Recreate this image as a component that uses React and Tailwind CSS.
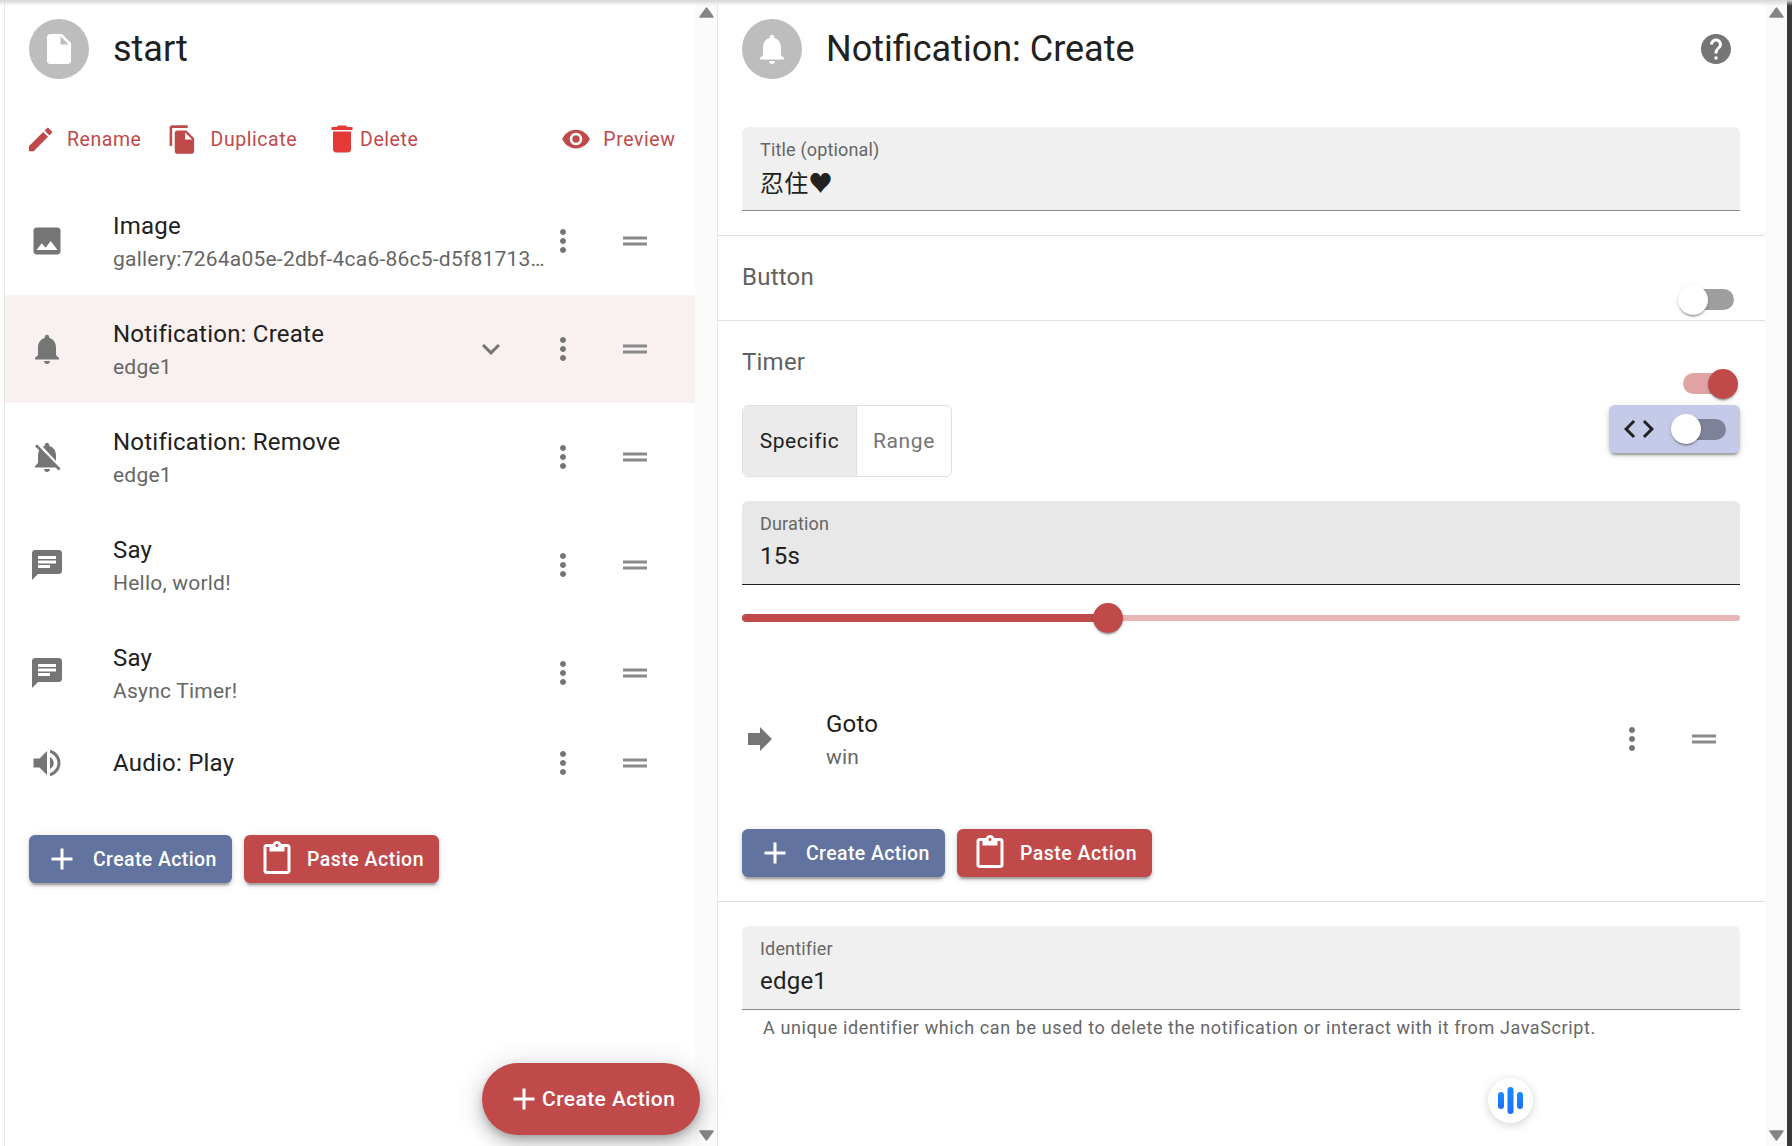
import React from "react";

const P = {
  file: "M6 2c-1.1 0-1.99.9-1.99 2L4 20c0 1.1.89 2 1.99 2H18c1.1 0 2-.9 2-2V8l-6-6H6zm7 7V3.5L18.5 9H13z",
  edit: "M3 17.25V21h3.75L17.81 9.94l-3.75-3.75L3 17.25zM20.71 7.04c.39-.39.39-1.02 0-1.41l-2.34-2.34c-.39-.39-1.02-.39-1.41 0l-1.83 1.83 3.75 3.75 1.83-1.83z",
  copy: "M16 1H4c-1.1 0-2 .9-2 2v14h2V3h12V1zm-1 4l6 6v10c0 1.1-.9 2-2 2H7.99C6.89 23 6 22.1 6 21l.01-14c0-1.1.89-2 1.99-2h7zm-1 7h5.5L14 6.5V12z",
  del: "M6 19c0 1.1.9 2 2 2h8c1.1 0 2-.9 2-2V7H6v12zM19 4h-3.5l-1-1h-5l-1 1H5v2h14V4z",
  eye: "M12 4.5C7 4.5 2.73 7.61 1 12c1.73 4.39 6 7.5 11 7.5s9.27-3.11 11-7.5c-1.73-4.39-6-7.5-11-7.5zM12 17c-2.76 0-5-2.24-5-5s2.24-5 5-5 5 2.24 5 5-2.24 5-5 5zm0-8c-1.66 0-3 1.34-3 3s1.34 3 3 3 3-1.34 3-3-1.34-3-3-3z",
  image: "M21 19V5c0-1.1-.9-2-2-2H5c-1.1 0-2 .9-2 2v14c0 1.1.9 2 2 2h14c1.1 0 2-.9 2-2zM8.5 13.5l2.5 3.01L14.5 12l4.5 6H5l3.5-4.5z",
  bell: "M12 22c1.1 0 2-.9 2-2h-4c0 1.1.89 2 2 2zm6-6v-5c0-3.07-1.64-5.64-4.5-6.32V4c0-.83-.67-1.5-1.5-1.5s-1.5.67-1.5 1.5v.68C7.63 5.36 6 7.92 6 11v5l-2 2v1h16v-1l-2-2z",
  bellOff: "M20 18.69L7.84 6.14 5.27 3.49 4 4.76l2.8 2.8v.01c-.52.99-.8 2.16-.8 3.42v5l-2 2v1h13.73l2 2L21 19.72l-1-1.03zM12 22c1.11 0 2-.89 2-2h-4c0 1.11.89 2 2 2zm6-7.32V11c0-3.08-1.64-5.64-4.5-6.32V4c0-.83-.67-1.5-1.5-1.5s-1.5.67-1.5 1.5v.68c-.15.03-.29.08-.42.12-.1.03-.2.07-.3.11h-.01c-.2.08-.4.17-.59.27-.01 0-.01 0-.02.01L18 14.68z",
  chat: "M20 2H4c-1.1 0-1.99.9-1.99 2L2 22l4-4h14c1.1 0 2-.9 2-2V4c0-1.1-.9-2-2-2zM6 9h12v2H6V9zm8 5H6v-2h8v2zm4-6H6V6h12v2z",
  volume: "M3 9v6h4l5 5V4L7 9H3zm13.5 3c0-1.77-1.02-3.29-2.5-4.03v8.05c1.48-.73 2.5-2.25 2.5-4.02zM14 3.23v2.06c2.89.86 5 3.54 5 6.71s-2.11 5.85-5 6.71v2.06c4.01-.91 7-4.49 7-8.77s-2.99-7.86-7-8.77z",
  expand: "M16.59 8.59L12 13.17 7.41 8.59 6 10l6 6 6-6z",
  more: "M12 8c1.1 0 2-.9 2-2s-.9-2-2-2-2 .9-2 2 .9 2 2 2zm0 2c-1.1 0-2 .9-2 2s.9 2 2 2 2-.9 2-2-.9-2-2-2zm0 6c-1.1 0-2 .9-2 2s.9 2 2 2 2-.9 2-2-.9-2-2-2z",
  drag: "M20 9H4v2h16V9zM4 15h16v-2H4v2z",
  add: "M19 13h-6v6h-2v-6H5v-2h6V5h2v6h6v2z",
  paste: "M19 2h-4.18C14.4.84 13.3 0 12 0c-1.3 0-2.4.84-2.82 2H5c-1.1 0-2 .9-2 2v16c0 1.1.9 2 2 2h14c1.1 0 2-.9 2-2V4c0-1.1-.9-2-2-2zm-7 0c.55 0 1 .45 1 1s-.45 1-1 1-1-.45-1-1 .45-1 1-1zm7 18H5V4h2v3h10V4h2v16z",
  forward: "M12 8V4l8 8-8 8v-4H4V8z",
  help: "M12 2C6.48 2 2 6.48 2 12s4.48 10 10 10 10-4.48 10-10S17.52 2 12 2zm1 17h-2v-2h2v2zm2.07-7.75l-.9.92C13.45 12.9 13 13.5 13 15h-2v-.5c0-1.1.45-2.1 1.17-2.83l1.24-1.26c.37-.36.59-.86.59-1.41 0-1.1-.9-2-2-2s-2 .9-2 2H8c0-2.21 1.79-4 4-4s4 1.79 4 4c0 .88-.36 1.68-.93 2.25z",
  code: "M9.4 16.6L4.8 12l4.6-4.6L8 6l-6 6 6 6 1.4-1.4zm5.2 0l4.6-4.6-4.6-4.6L16 6l6 6-6 6-1.4-1.4z",
};

function Icon({ d, className }) {
  return (
    <svg viewBox="0 0 24 24" fill="currentColor" className={className}>
      <path d={d} />
    </svg>
  );
}

function Arrow({ down }) {
  return (
    <svg viewBox="0 0 15 11" className={down ? "w-[15px] h-[11px] rotate-180" : "w-[15px] h-[11px]"}>
      <path d="M7.5 1 L14 10 L1 10 Z" fill="#858585" stroke="#858585" strokeWidth="1.5" strokeLinejoin="round" />
    </svg>
  );
}

function ScrollCol() {
  return (
    <div className="flex flex-col justify-between w-[22px] shrink-0 bg-[#fbfbfb] pl-[4px] pt-[7px] pb-[5px]">
      <Arrow />
      <Arrow down />
    </div>
  );
}

function Avatar({ d }) {
  return (
    <div className="w-[60px] h-[60px] rounded-full bg-[#bdbdbd] flex items-center justify-center shrink-0">
      <Icon d={d} className="w-[36px] h-[36px] text-white" />
    </div>
  );
}

function Row({ icon, title, sub, chevron, selected, short, right }) {
  return (
    <div
      className={
        "flex items-center pl-[24px] " +
        (short ? "h-[72px] " : "h-[108px] ") +
        (selected ? "bg-[#f9f1f0]" : "")
      }
    >
      <div className="w-[84px] shrink-0">
        <Icon d={icon} className="w-[36px] h-[36px] text-[#757575]" />
      </div>
      <div className="flex-1 min-w-0">
        <div className="text-[24px] leading-[36px] tracking-[0.00938em] text-[#212121] truncate">{title}</div>
        {sub && <div className="text-[21px] leading-[30px] tracking-[0.01071em] text-[#666666] truncate">{sub}</div>}
      </div>
      {chevron && (
        <div className="w-[72px] mr-[19px] flex justify-center shrink-0">
          <Icon d={P.expand} className="w-[36px] h-[36px] text-[#757575]" />
        </div>
      )}
      <div className="w-[34px] flex justify-center shrink-0">
        <Icon d={P.more} className="w-[36px] h-[36px] max-w-none shrink-0 text-[#757575]" />
      </div>
      <div className={(right ? "mr-[6px]" : "mr-[5px]") + " w-[110px] flex justify-center shrink-0"}>
        <Icon d={P.drag} className="w-[36px] h-[36px] text-[#8a8a8a]" />
      </div>
    </div>
  );
}

function ActionButtons({ className }) {
  return (
    <div className={"flex gap-[12px] " + className}>
      <button className="h-[48px] w-[203px] flex items-center pl-[15px] rounded-[6px] bg-[#62739f] text-white shadow-[0_4.5px_1.5px_-3px_rgba(0,0,0,0.2),0_3px_3px_0_rgba(0,0,0,0.14),0_1.5px_7.5px_0_rgba(0,0,0,0.12)]">
        <Icon d={P.add} className="w-[36px] h-[36px]" />
        <span className="ml-[13px] pt-[2px] text-[19.5px] font-medium leading-[36px] tracking-[0.02em]">Create Action</span>
      </button>
      <button className="h-[48px] w-[195px] flex items-center pl-[15px] rounded-[6px] bg-[#c04a4a] text-white shadow-[0_4.5px_1.5px_-3px_rgba(0,0,0,0.2),0_3px_3px_0_rgba(0,0,0,0.14),0_1.5px_7.5px_0_rgba(0,0,0,0.12)]">
        <Icon d={P.paste} className="w-[36px] h-[36px]" />
        <span className="ml-[12px] pt-[2px] text-[19.5px] font-medium leading-[36px] tracking-[0.025em]">Paste Action</span>
      </button>
    </div>
  );
}

function Field({ label, value, active, valueClass }) {
  return (
    <div
      className={
        "h-[84px] rounded-t-[6px] pl-[18px] pt-[12px] border-b-[1.5px] " +
        (active ? "bg-[#e8e8e8] border-[#212121]" : "bg-[#f0f0f0] border-[#8c8c8c]")
      }
    >
      <div className="text-[18px] leading-[21px] tracking-[0.00938em] text-[#666666] mb-[4px]">{label}</div>
      <div className={"text-[24px] leading-[36px] tracking-[0.00938em] text-[#212121] " + (valueClass || "")}>{value}</div>
    </div>
  );
}

function Switch({ on, track }) {
  return (
    <div className={"relative w-[51px] h-[21px] rounded-full " + track}>
      <div
        className={
          "absolute top-[-4.5px] w-[30px] h-[30px] rounded-full shadow-[0_3px_1.5px_-1.5px_rgba(0,0,0,0.2),0_1.5px_1.5px_0_rgba(0,0,0,0.14),0_1.5px_4.5px_0_rgba(0,0,0,0.12)] " +
          (on ? "right-[-4px] bg-[#c04a4a]" : "left-[-5px] bg-white")
        }
      />
    </div>
  );
}

export default function App() {
  return (
    <div className="relative w-[1792px] h-[1146px] overflow-hidden flex bg-white font-[Roboto,'Noto_Sans_CJK_SC',sans-serif]">
      <div className="absolute inset-x-0 top-0 h-[6px] bg-gradient-to-b from-[#d6d6d6] to-transparent z-10" />

      {/* left pane */}
      <div className="relative ml-[4px] w-[714px] shrink-0 flex border-l border-r border-[#e6e6e6]">
        <div className="w-[690px] shrink-0 pt-[19px]">
          <div className="flex items-center pl-[24px]">
            <Avatar d={P.file} />
            <div className="ml-[24px] text-[36px] leading-[60px] text-[#212121]">start</div>
          </div>

          <div className="flex items-center h-[36px] mt-[42px] text-[19.5px] tracking-[0.02857em] font-normal text-[#c04a4a]">
            <Icon d={P.edit} className="ml-[20px] w-[31px] h-[31px]" />
            <span className="ml-[11px] pt-[2px]">Rename</span>
            <Icon d={P.copy} className="ml-[25px] w-[31px] h-[31px]" />
            <span className="ml-[13px] pt-[2px]">Duplicate</span>
            <Icon d={P.del} className="ml-[27px] w-[36px] h-[36px] text-[#e53935]" />
            <span className="pt-[2px]">Delete</span>
            <Icon d={P.eye} className="ml-[143px] w-[30px] h-[30px]" />
            <span className="ml-[12px] pt-[2px]">Preview</span>
          </div>

          <div className="mt-[30px]">
            <Row icon={P.image} title="Image" sub="gallery:7264a05e-2dbf-4ca6-86c5-d5f81713c0a1" />
            <Row icon={P.bell} title="Notification: Create" sub="edge1" chevron selected />
            <Row icon={P.bellOff} title="Notification: Remove" sub="edge1" />
            <Row icon={P.chat} title="Say" sub="Hello, world!" />
            <Row icon={P.chat} title="Say" sub="Async Timer!" />
            <Row icon={P.volume} title="Audio: Play" short />
          </div>

          <ActionButtons className="mt-[36px] ml-[24px]" />
        </div>
        <ScrollCol />

        <button className="absolute right-[17px] bottom-[11px] h-[72px] w-[218px] rounded-[36px] bg-[#c04a4a] text-white flex items-center pl-[24px] shadow-[0_4.5px_7.5px_-1.5px_rgba(0,0,0,0.2),0_9px_15px_1.5px_rgba(0,0,0,0.14),0_3px_27px_3px_rgba(0,0,0,0.12)]">
          <Icon d={P.add} className="w-[36px] h-[36px]" />
          <span className="text-[21px] font-medium tracking-[0.02em] pt-[2px]">Create Action</span>
        </button>
      </div>

      {/* right pane */}
      <div className="relative w-[1047px] shrink-0 pt-[19px]">
        <div className="flex items-center pl-[24px] pr-[31px]">
          <Avatar d={P.bell} />
          <div className="ml-[24px] flex-1 text-[36px] leading-[60px] text-[#212121]">Notification: Create</div>
          <Icon d={P.help} className="w-[36px] h-[36px] text-[#757575]" />
        </div>

        <div className="mt-[48px] pl-[24px] pr-[25px]">
          <Field label="Title (optional)" value="忍住♥" valueClass="pt-[2px]" />
        </div>

        <div className="mt-[24px] h-[86px] border-t border-b border-[#e0e0e0] pl-[24px] pr-[31px] flex justify-between">
          <div className="pt-[23px] text-[24px] leading-[36px] tracking-[0.00938em] text-[#616161]">Button</div>
          <div className="pt-[53px]">
            <Switch track="bg-[#9e9e9e]" />
          </div>
        </div>

        <div className="h-[84px] pl-[24px] pr-[31px] flex justify-between">
          <div className="pt-[23px] text-[24px] leading-[36px] tracking-[0.00938em] text-[#616161]">Timer</div>
          <div className="pt-[52px]">
            <Switch on track="bg-[#e0a4a4]" />
          </div>
        </div>

        <div className="pl-[24px] pr-[25px] flex justify-between items-start">
          <div className="flex h-[72px] rounded-[6px] border border-[#e0e0e0] text-[21px] tracking-[0.02857em]">
            <div className="w-[114px] flex items-center justify-center bg-[#ebebeb] rounded-l-[6px] border-r border-[#e0e0e0] text-[#212121] pt-[1px]">Specific</div>
            <div className="w-[94px] flex items-center justify-center text-[#757575] pt-[1px]">Range</div>
          </div>
          <div className="flex items-center w-[131px] h-[48px] rounded-[6px] bg-[#c5cae9] pl-[12px] shadow-[0_4.5px_1.5px_-3px_rgba(0,0,0,0.2),0_3px_3px_0_rgba(0,0,0,0.14),0_1.5px_7.5px_0_rgba(0,0,0,0.12)]">
            <Icon d={P.code} className="w-[36px] h-[36px] text-[#212121]" />
            <div className="ml-[19px]">
              <Switch track="bg-[#7e8299] !w-[50px]" />
            </div>
          </div>
        </div>

        <div className="mt-[24px] pl-[24px] pr-[25px]">
          <Field label="Duration" value="15s" active />
          <div className="mt-[18px] h-[30px] flex items-center">
            <div className="w-[366px] h-[8px] rounded-l-full bg-[#c04a4a]" />
            <div className="relative flex-1 h-[6px] rounded-r-full bg-[#e8b6b6]">
              <div className="absolute left-[-15px] top-[-12px] w-[30px] h-[30px] rounded-full bg-[#c04a4a] shadow-[0_3px_1.5px_-1.5px_rgba(0,0,0,0.2),0_1.5px_1.5px_0_rgba(0,0,0,0.14),0_1.5px_4.5px_0_rgba(0,0,0,0.12)]" />
            </div>
          </div>
        </div>

        <div className="mt-[52px]">
          <Row icon={P.forward} title="Goto" sub="win" right />
        </div>

        <ActionButtons className="mt-[36px] ml-[24px]" />

        <div className="mt-[24px] border-t border-[#e0e0e0] pt-[24px] pl-[24px] pr-[25px]">
          <Field label="Identifier" value="edge1" />
          <div className="mt-[3px] pl-[21px] text-[18px] leading-[30px] tracking-[0.03333em] text-[#666666]">
            A unique identifier which can be used to delete the notification or interact with it from JavaScript.
          </div>
        </div>

        <div className="absolute left-[770px] top-[1078px] w-[45px] h-[45px] rounded-full bg-white shadow-[0_2px_10px_rgba(0,0,0,0.18)] flex items-center justify-center">
          <svg viewBox="0 0 25 27" className="w-[25px] h-[27px]">
            <defs>
              <linearGradient id="vb" x1="0" y1="0" x2="0" y2="1">
                <stop offset="0" stopColor="#1a8cff" />
                <stop offset="1" stopColor="#1f6bff" />
              </linearGradient>
            </defs>
            <rect x="0" y="5" width="6" height="17" rx="3" fill="url(#vb)" />
            <rect x="9.5" y="0" width="6" height="27" rx="3" fill="url(#vb)" />
            <rect x="19" y="5" width="6" height="17" rx="3" fill="url(#vb)" />
          </svg>
        </div>
      </div>

      <ScrollCol />
      <div className="flex-1 bg-[#3a3a3a]" />
    </div>
  );
}
